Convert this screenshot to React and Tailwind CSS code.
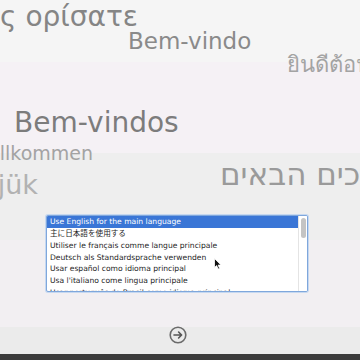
const languages = [
  'Use English for the main language',
  '主に日本語を使用する',
  'Utiliser le français comme langue principale',
  'Deutsch als Standardsprache verwenden',
  'Usar español como idioma principal',
  "Usa l'italiano come lingua principale",
  'Usar português do Brasil como idioma principal',
];

const font = { fontFamily: '"DejaVu Sans", "Noto Sans CJK JP", sans-serif' };

// floating "welcome" words, each placed on the backdrop like in the installer
function Words() {
  return (
    <div className="relative h-[215px] shrink-0 whitespace-nowrap leading-none" style={font}>
      <span className="absolute right-[222px] top-[3px] text-[28px] text-[#858585]">Καλώς ορίσατε</span>
      <span className="absolute left-[128px] top-[30px] text-[23px] text-[#8a8a8a]">Bem-vindo</span>
      <span className="absolute left-[287px] top-[54px] text-[22px] text-[#a3a3a3]">ยินดีต้อนรับ</span>
      <span className="absolute left-[14px] top-[109px] text-[28px] text-[#7c7c7c]">Bem-vindos</span>
      <span className="absolute right-[267px] top-[144px] text-[19px] text-[#a3a3a3]">Willkommen</span>
      <span className="absolute right-[322px] top-[171px] text-[27px] text-[#b2b2b2]">Üdvözöljük</span>
      <span dir="rtl" className="absolute left-[220px] top-[159px] text-[31px] text-[#9a9a9a]">ברוכים הבאים</span>
    </div>
  );
}

function LanguageList() {
  return (
    <div className="pl-[46px]">
      <div className="relative flex w-[262px] h-[77px] rounded-[2px] border border-[#7fa7dc] bg-white overflow-hidden shadow-[0_0_0_1px_#c6d8f0]">
        <div className="flex-1 overflow-hidden text-[7.6px] text-[#1e1e1e]" style={font}>
          {languages.map((l, i) => (
            <div
              key={l}
              className={`h-[11.8px] flex items-center pl-[3px] whitespace-nowrap ${
                i === 0 ? 'bg-[#3a76d6] text-white' : ''
              }`}
            >
              {l}
            </div>
          ))}
        </div>
        <div className="w-[9px] shrink-0 bg-white border-l border-[#e4e4e4] pt-[2px] flex justify-center">
          <div className="w-[5px] h-[20px] rounded-full bg-[#c4c4c4]" />
        </div>
        {/* mouse pointer */}
        <svg className="absolute left-[167px] top-[42px]" width="8" height="12" viewBox="0 0 8 12">
          <path d="M0.5 0.5 L0.5 9.5 L2.6 7.6 L4.2 11 L5.6 10.4 L4.1 7.1 L7 7.1 Z" fill="#111" stroke="#fff" strokeWidth="0.8" />
        </svg>
      </div>
    </div>
  );
}

export default function App() {
  return (
    <div className="w-[360px] h-[360px] overflow-hidden flex flex-col bg-[linear-gradient(to_bottom,#f5f5f5_0_62px,#f5f1f5_62px_153px,#eeeeee_153px_240px,#f2eff2_240px_327px,#ebebeb_327px_354px)]">
      <Words />
      <LanguageList />
      <div className="pl-[169px] mt-[34px]">
        <svg width="18" height="18" viewBox="0 0 18 18">
          <circle cx="9" cy="9" r="7.8" fill="none" stroke="#6b6b6b" strokeWidth="1.6" />
          <path d="M5 9 H12.5 M9.6 6 L12.6 9 L9.6 12" fill="none" stroke="#555" strokeWidth="1.6" strokeLinecap="round" strokeLinejoin="round" />
        </svg>
      </div>
      <div className="mt-auto h-[6px] shrink-0 bg-[#3b3b3b]" />
    </div>
  );
}
